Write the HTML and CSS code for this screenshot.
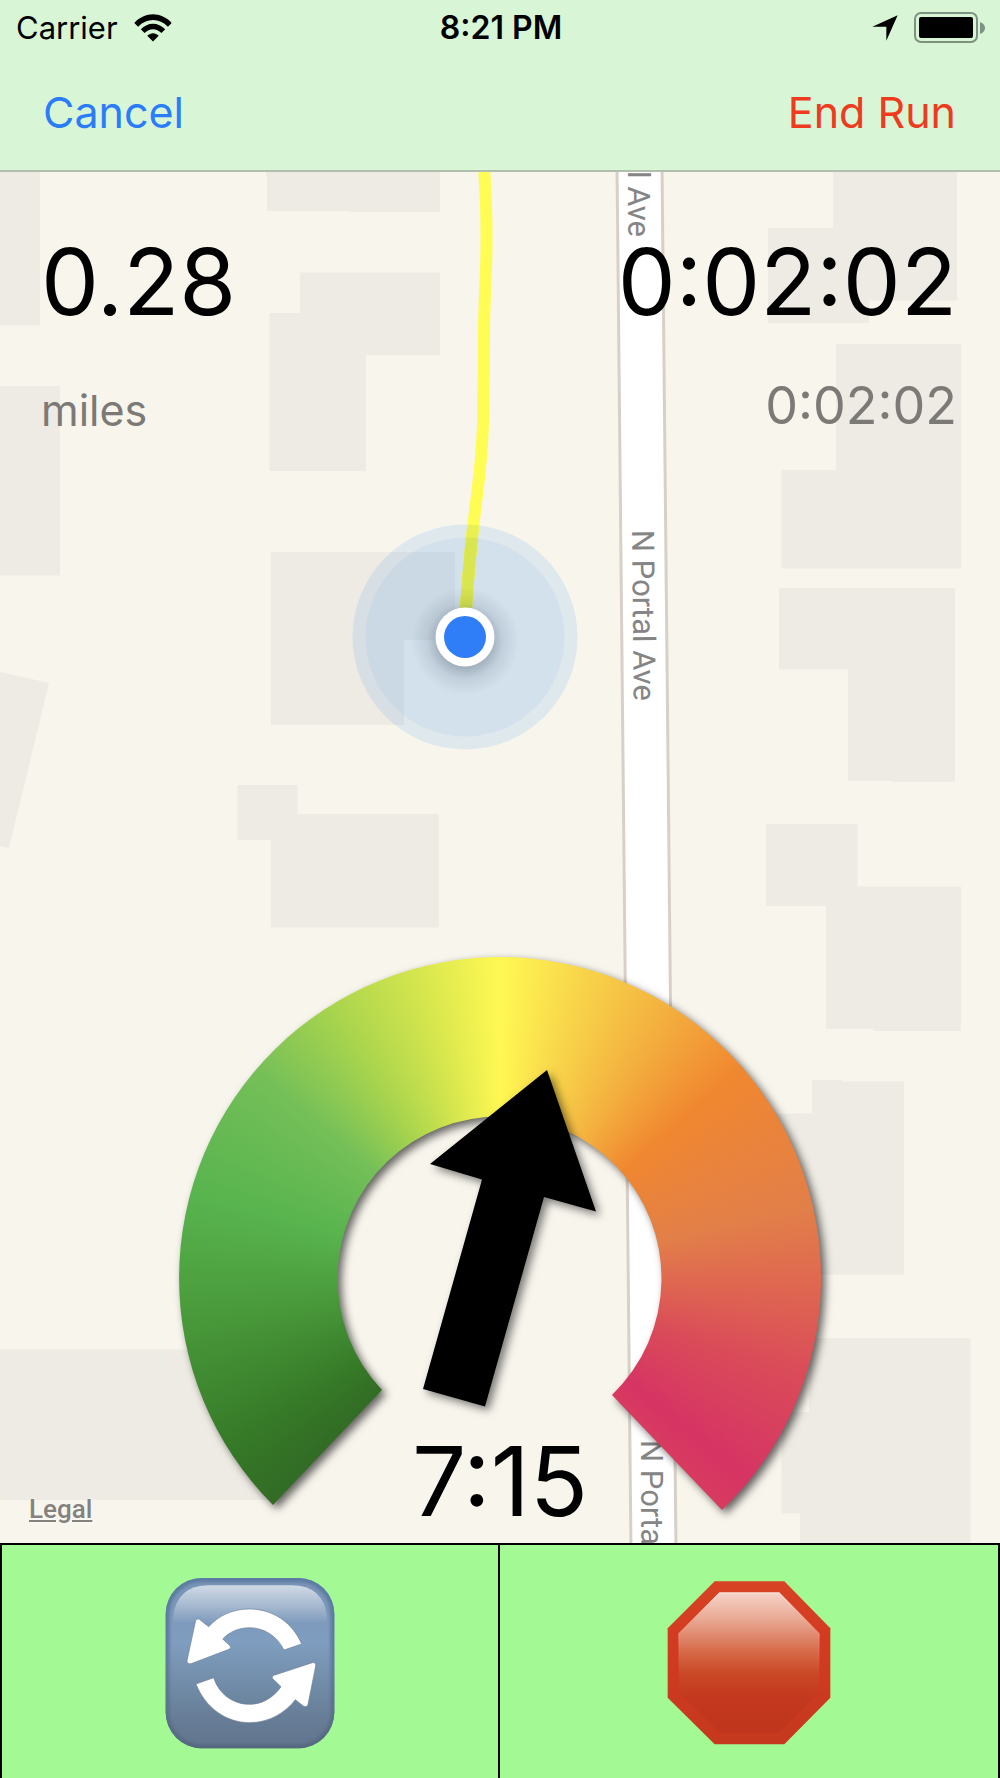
FILE: index.html
```
<!DOCTYPE html>
<html lang="en">
<head>
<meta charset="utf-8">
<meta name="viewport" content="width=device-width, initial-scale=1">
<title>Run</title>
<link rel="stylesheet" href="styles.css">
</head>
<body>
<div class="screen">
  <header class="header">
    <div class="status">
      <div class="status-left">
        <span>Carrier</span>
        <svg class="wifi" viewBox="0 0 112 82" aria-hidden="true">
          <path d="M1 26C32-8 80-8 111 26L100 37C75 11 37 11 12 37Z"/>
          <path d="M20 45C40 23 72 23 92 45L81 56C66 41 46 41 31 56Z"/>
          <path d="M39 64C49 54 63 54 73 64L56 81Z"/>
        </svg>
      </div>
      <span class="clock">8:21 PM</span>
      <div class="status-right">
        <svg class="locator" viewBox="0 0 78 78" aria-hidden="true"><path d="M77 1 43 77 43 35 1 35Z"/></svg>
        <svg class="battery" viewBox="0 0 72 32" aria-hidden="true">
          <rect class="battery-shell" x="1" y="1" width="62" height="29" rx="6"/>
          <rect x="5" y="5" width="54" height="21" rx="2"/>
          <path class="battery-cap" d="M66 10q5 2 5 6t-5 6z"/>
        </svg>
      </div>
    </div>
    <nav class="nav">
      <button class="link cancel" type="button">Cancel</button>
      <button class="link end" type="button">End Run</button>
    </nav>
  </header>

  <main class="map">
    <svg class="map-canvas" viewBox="0 172 1000 1371" preserveAspectRatio="xMidYMid slice" aria-hidden="true">
      <defs>
        <path id="route" d="M484 165L486 205Q487 235 486 270Q484 310 484 340L483 425Q482 455 477 495Q469 555 465 625"/>
        <clipPath id="ring"><circle cx="465" cy="637" r="112.5"/></clipPath>
        <clipPath id="disc"><circle cx="465" cy="637" r="99.5"/></clipPath>
        <radialGradient id="dotShadow">
          <stop offset="0.45" stop-color="#203040" stop-opacity=".3"/>
          <stop offset="0.7" stop-color="#203040" stop-opacity=".1"/>
          <stop offset="1" stop-color="#203040" stop-opacity="0"/>
        </radialGradient>
      </defs>
      <g class="buildings">
        <path d="M0 165H40V325.500H0Z"/>
        <path d="M0 386H60V575.500H0Z"/>
        <path d="M266 165H440V212H350V211H267V176H266Z"/>
        <path d="M300 272.500H440V355H366V471H269.500V313H300Z"/>
        <path d="M271 552H455V640H404V725H271Z"/>
        <path d="M0 672 49 683 9 848 0 846Z"/>
        <path d="M237.500 785H297.500V814H439V927.500H271V840H237.500Z"/>
        <path d="M833 165H957V300.500H869V323H768V228H833Z"/>
        <path d="M836 344H961V568.500H781.500V470H836Z"/>
        <path d="M779 588H955V782H893V781H848V669.500H779Z"/>
        <path d="M766 824H857.500V886.500H961V1031H873V1029H826V906H766Z"/>
        <path d="M812 1080H842V1081.500H904V1274.500H760V1113.500H812Z"/>
        <path d="M809 1338H970.500V1545H800V1513.500H781.500V1412H809Z"/>
        <path d="M0 1349.500H270V1500H0Z"/>
      </g>
      <path class="road" d="M617 165 662 165 676 1550 631 1550Z"/>
      <g class="street">
        <text transform="translate(628 237) rotate(90)" text-anchor="end">l Ave</text>
        <text transform="translate(632 530) rotate(89.4)">N Portal Ave</text>
        <text transform="translate(641 1440) rotate(90)">N Portal Ave</text>
      </g>
      <circle class="halo-ring" cx="465" cy="637" r="112.5"/>
      <circle class="halo" cx="465" cy="637" r="99.5"/>
      <use href="#route" class="route"/>
      <g clip-path="url(#ring)"><use href="#route" class="route route-ring"/></g>
      <g clip-path="url(#disc)"><use href="#route" class="route route-disc"/></g>
      <circle cx="465" cy="641" r="54" fill="url(#dotShadow)"/>
      <circle cx="465" cy="637" r="29.500" fill="#fff"/>
      <circle cx="465" cy="637" r="21" fill="#307ef7"/>
    </svg>

    <section class="stats">
      <div class="stat">
        <span class="value">0.28</span>
        <span class="caption unit">miles</span>
      </div>
      <div class="stat stat-end">
        <span class="value">0:02:02</span>
        <span class="caption lap">0:02:02</span>
      </div>
    </section>

    <section class="pace">
      <a class="legal" href="#legal">Legal</a>
      <div class="gauge">
        <div class="dial"><div class="dial-face"></div></div>
        <svg class="needle" viewBox="0 0 644 560" aria-hidden="true">
          <path d="M369 114 418 255.500 366 241 307 450.500 245 433 304 223.500 252 208Z"/>
        </svg>
        <output class="value pace-value">7:15</output>
      </div>
    </section>
  </main>

  <footer class="controls">
    <button class="control" type="button" aria-label="Restart">
      <svg class="control-icon" viewBox="70 82 516 516" aria-hidden="true">
        <defs>
          <linearGradient id="tile" x1="0" y1="0" x2="0" y2="1">
            <stop offset="0" stop-color="#7893b5"/><stop offset=".38" stop-color="#7f9dbf"/>
            <stop offset=".7" stop-color="#6d87a1"/><stop offset=".85" stop-color="#667b95"/><stop offset="1" stop-color="#62758e"/>
          </linearGradient>
          <linearGradient id="tileShine" x1="0" y1="0" x2="0" y2="1">
            <stop offset="0" stop-color="#fff" stop-opacity=".65"/><stop offset=".5" stop-color="#fff" stop-opacity=".35"/><stop offset="1" stop-color="#fff" stop-opacity="0"/>
          </linearGradient>
          <linearGradient id="tileEdge" x1="0" y1="0" x2="0" y2="1">
            <stop offset="0" stop-color="#5c7ba3"/><stop offset=".5" stop-color="#607c9f"/><stop offset="1" stop-color="#56687f"/>
          </linearGradient>
          <filter id="soft"><feGaussianBlur stdDeviation="5"/></filter>
          <clipPath id="tileClip"><rect x="75" y="85" width="506" height="511" rx="108"/></clipPath>
        </defs>
        <rect x="75" y="85" width="506" height="511" rx="108" fill="url(#tile)"/>
        <path d="M97 222V205Q107 107 205 107H452Q550 107 560 205V222Z" fill="url(#tileShine)"/>
        <g clip-path="url(#tileClip)"><rect x="75" y="85" width="506" height="511" rx="108" fill="none" stroke="url(#tileEdge)" stroke-width="24" filter="url(#soft)"/></g>
        <g fill="#fff" stroke="#6f8198" stroke-width="2" stroke-linejoin="round">
          <path d="M483 283C455 217 395 178 326 178C277 178 235 197 204 231L176 209Q166 205 164 217L139 333Q139 344 151 342L265 299Q273 295 268 288L246 268C266 247 293 234 327 234C371 234 410 260 430 301Z"/>
          <path d="M166 403C193 472 254 519 327 519C382 519 432 492 464 450L488 469Q499 474 502 464L525 349Q526 337 515 339L400 377Q392 380 396 387L421 411C399 443 365 464 327 464C278 464 235 434 219 384Z"/>
        </g>
      </svg>
    </button>
    <button class="control" type="button" aria-label="Stop">
      <svg class="control-icon" viewBox="66 82 516 516" aria-hidden="true">
        <defs>
          <linearGradient id="stopEdge" x1="0" y1="0" x2="0" y2="1">
            <stop offset="0" stop-color="#d74324"/><stop offset=".35" stop-color="#d23b21"/><stop offset="1" stop-color="#c5391f"/>
          </linearGradient>
          <linearGradient id="stopFace" x1="0" y1="0" x2="0" y2="1">
            <stop offset="0" stop-color="#f5d2c6"/><stop offset=".18" stop-color="#eaab97"/>
            <stop offset=".42" stop-color="#d66a49"/><stop offset=".58" stop-color="#c94825"/>
            <stop offset=".75" stop-color="#c3381e"/><stop offset="1" stop-color="#bf351d"/>
          </linearGradient>
          <linearGradient id="stopRim" x1="0" y1="0" x2="0" y2="1">
            <stop offset="0" stop-color="#fbe0d6"/><stop offset=".3" stop-color="#e78b70"/><stop offset=".65" stop-color="#c73b20" stop-opacity="0"/>
          </linearGradient>
        </defs>
        <path d="M221 95H430L568 236V444L430 584H221L80 444V236Z" fill="url(#stopEdge)"/>
        <path d="M236 130H414L534 252V428L414 549H236L114 428V252Z" fill="url(#stopFace)" stroke="url(#stopRim)" stroke-width="4"/>
      </svg>
    </button>
  </footer>
</div>
</body>
</html>
```
FILE: styles.css
```
* { box-sizing: border-box; }

body {
  margin: 0;
  font-family: Inter, "Liberation Sans", sans-serif;
  color: #000;
}

button {
  margin: 0;
  padding: 0;
  border: 0;
  background: none;
  font: inherit;
  cursor: pointer;
}

.screen {
  display: flex;
  flex-direction: column;
  min-height: 100vh;
}

/* Header */
.header {
  background: #d8f6d6;
  border-bottom: 2px solid #b3bfae;
}

.status {
  display: grid;
  grid-template-columns: 1fr auto 1fr;
  align-items: center;
  height: 56px;
  padding: 0 14px 0 16px;
  font-size: 31px;
  line-height: 40px;
}

.status-left,
.status-right {
  display: flex;
  align-items: center;
  gap: 16px;
}

.status-right { justify-content: flex-end; }
.clock { font-size: 32px; font-weight: 600; }
.wifi { width: 38px; height: 28px; }
.locator { width: 26px; height: 26px; }
.battery { width: 72px; height: 32px; }

.battery-shell {
  fill: none;
  stroke: #7d9280;
  stroke-width: 2;
}

.battery-cap { fill: #7d9280; }

.nav {
  display: flex;
  justify-content: space-between;
  height: 114px;
  padding: 0 44px 0 43px;
}

.link {
  height: 112px;
  font-size: 43px;
  line-height: 56px;
}

.cancel { color: #2b7cf9; }
.end { color: #ee3a1d; }

/* Map */
.map {
  position: relative;
  flex: 1;
  display: flex;
  flex-direction: column;
  justify-content: space-between;
  overflow: hidden;
  background: #f8f5ed;
}

.map-canvas {
  position: absolute;
  inset: 0;
  width: 100%;
  height: 100%;
}

.buildings { fill: #eeebe4; }

.road {
  fill: #fff;
  stroke: #d8d0c7;
  stroke-width: 3;
}

.street text {
  fill: #858585;
  font-family: Roboto, sans-serif;
  font-size: 31px;
}

.halo-ring { fill: rgba(50, 140, 240, 0.12); }
.halo { fill: rgba(50, 140, 240, 0.07); }

.route {
  fill: none;
  stroke: #fffd54;
  stroke-width: 12;
}

.route-ring { stroke: #e9f052; }
.route-disc { stroke: #d9e64f; }

.stats {
  position: relative;
  display: flex;
  justify-content: space-between;
  padding: 60px 43px 0 41px;
}

.stat {
  display: flex;
  flex-direction: column;
  gap: 44px;
}

.stat-end { text-align: right; }

.value {
  font-size: 92px;
  line-height: 100px;
}

.caption {
  color: #7c7a76;
  line-height: 60px;
}

.unit { font-size: 43px; padding-top: 4px; }
.lap { font-size: 52px; }

/* Pace gauge */
.pace {
  position: relative;
  display: grid;
  grid-template-columns: 1fr 644px 1fr;
  align-items: end;
}

.legal {
  padding: 0 0 18px 29px;
  color: #85827d;
  font-family: Roboto, sans-serif;
  font-size: 26px;
  font-weight: 500;
  line-height: 32px;
  text-shadow: 0 0 2px #fff;
}

.gauge {
  display: grid;
  justify-items: center;
  align-items: end;
  height: 587px;
}

.dial,
.needle,
.pace-value { grid-area: 1 / 1; }

.dial {
  align-self: start;
  width: 644px;
  height: 560px;
  filter: drop-shadow(4px 4px 4px rgba(0, 0, 0, 0.6));
}

.dial-face {
  width: 644px;
  height: 644px;
  background: conic-gradient(from 225deg,
    #326b25 0deg, #357827 12deg, #4a9b3b 39deg, #58b44e 60deg,
    #74bf58 85deg, #abd54d 104deg, #d6e64d 120deg, #fff853 135deg,
    #f8d54a 150deg, #f4b440 165deg, #f08730 184deg, #e27f49 212deg,
    #df6850 226deg, #da4b59 243deg, #d63464 264deg, #d83b5f 272deg,
    #326b25 360deg);
  clip-path: path("M95 549A321 321 0 1 1 544 554L434 439A162 162 0 1 0 204 434Z");
}

.needle {
  align-self: start;
  width: 644px;
  height: 560px;
  filter: drop-shadow(4px 4px 4px rgba(0, 0, 0, 0.5));
}

.needle path { fill: #000; }

.pace-value {
  padding-bottom: 12px;
  font-size: 96px;
}

/* Controls */
.controls {
  display: grid;
  grid-template-columns: 1fr 1fr;
  border: 2px solid #000;
  border-bottom: 0;
}

.control {
  display: grid;
  place-items: center;
  padding: 32px 0 29px;
  background: #a3f994;
}

.control:first-child { border-right: 2px solid #000; }

.control-icon {
  display: block;
  width: 172px;
  height: 172px;
}
```
